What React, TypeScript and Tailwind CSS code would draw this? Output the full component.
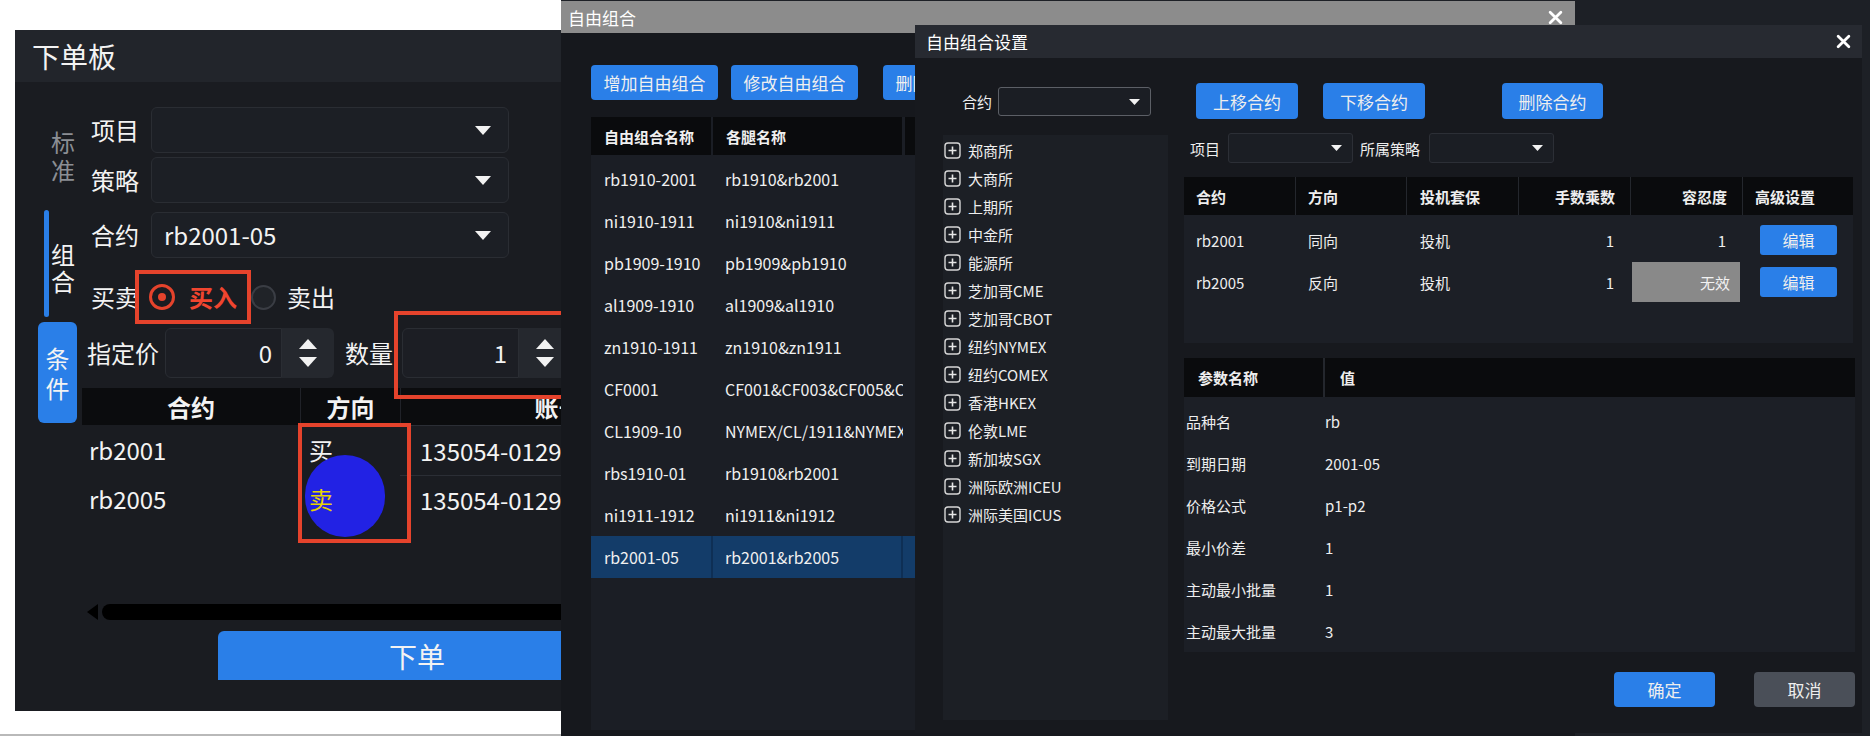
import React from "react";

const BLUE = "bg-[#2a7fe8]";

function Caret({ w = 14, h = 8, up = false }: { w?: number; h?: number; up?: boolean }) {
  return (
    <svg width={w} height={h} viewBox="0 0 14 8" preserveAspectRatio="none" className="shrink-0">
      <path d={up ? "M0 8 L7 0 L14 8 Z" : "M0 0 L14 0 L7 8 Z"} fill="#f2f2f2" />
    </svg>
  );
}

function CloseX() {
  return (
    <svg width="15" height="15" viewBox="0 0 14 14" className="shrink-0">
      <path d="M2 2 L12 12 M12 2 L2 12" stroke="#ffffff" strokeWidth="2.6" strokeLinecap="round" />
    </svg>
  );
}

function PlusBox() {
  return (
    <svg width="17" height="17" viewBox="0 0 17 17" className="shrink-0">
      <rect x="1" y="1" width="15" height="15" rx="3" fill="none" stroke="#d6d6d6" strokeWidth="1.4" />
      <path d="M8.5 4.5v8M4.5 8.5h8" stroke="#e6e6e6" strokeWidth="1.6" />
    </svg>
  );
}

function Spinner() {
  return (
    <div className="w-[52px] h-full bg-[#25282e] rounded-r-md flex flex-col items-center justify-center gap-[8px]">
      <Caret w={18} h={10} up />
      <Caret w={18} h={10} />
    </div>
  );
}

function OrderSelect({ label, value, className = "" }: { label: string; value?: string; className?: string }) {
  return (
    <div className={`flex items-center pl-[9px] ${className}`}>
      <span className="w-[60px] text-[24px] leading-none">{label}</span>
      <div className="w-[358px] h-[46px] rounded-md border border-[#2a2d33] bg-[#1c1f25] flex items-center justify-between pl-[12px] pr-[17px]">
        <span className="text-[24px] leading-none">{value ?? ""}</span>
        <Caret w={16} h={9} />
      </div>
    </div>
  );
}

function OrderPanel() {
  return (
    <div className="absolute left-[15px] top-[30px] w-[620px] h-[681px] bg-[#1a1c21] flex flex-col text-[#f3f3f3]">
      <div className="h-[52px] shrink-0 bg-[#22252b] flex items-center pl-[17px] text-[28px] leading-none">
        下单板
      </div>
      <div className="flex flex-1">
        <div className="w-[67px] shrink-0 flex flex-col">
          <div className="mt-[46px] ml-[36px] flex flex-col text-[24px] leading-[28px] text-[#8b8e94]">
            <span>标</span>
            <span>准</span>
          </div>
          <div className="mt-[26px] ml-[29px] h-[107px] flex items-center">
            <div className="w-[5px] h-full bg-[#2a7fe8] rounded-full" />
            <div className="ml-[2px] mt-[6px] flex flex-col text-[24px] leading-[27px]">
              <span>组</span>
              <span>合</span>
            </div>
          </div>
          <div className={`mt-[5px] ml-[23px] w-[39px] h-[101px] ${BLUE} rounded-md flex flex-col items-center justify-center text-[24px] leading-[30px]`}>
            <span>条</span>
            <span>件</span>
          </div>
        </div>

        <div className="flex-1 flex flex-col pt-[25px]">
          <OrderSelect label="项目" />
          <OrderSelect label="策略" className="mt-[4px]" />
          <OrderSelect label="合约" value="rb2001-05" className="mt-[9px]" />

          <div className="mt-[12px] h-[54px] flex items-center pl-[9px] text-[24px] leading-none">
            <span>买卖</span>
            <div className="-ml-[4px] h-[54px] w-[116px] shrink-0 border-4 border-[#e5432c] flex items-center pl-[10px]">
              <div className="w-[26px] h-[26px] rounded-full border-[3px] border-[#e5432c] flex items-center justify-center">
                <div className="w-[8px] h-[8px] rounded-full bg-[#e5432c]" />
              </div>
              <span className="ml-[14px] text-[#f0452f] font-bold">买入</span>
            </div>
            <div className="w-[25px] h-[25px] rounded-full border-2 border-[#3a3d44] bg-[#202328]" />
            <span className="ml-[11px]">卖出</span>
          </div>

          <div className="mt-[4px] h-[50px] flex items-center pl-[5px] text-[24px] leading-none">
            <span className="w-[72px]">指定价</span>
            <div className="ml-[6px] h-full flex">
              <div className="w-[117px] h-full rounded-l-md border border-[#2a2d33] bg-[#1c1e24] flex items-center justify-end pr-[9px]">
                0
              </div>
              <Spinner />
            </div>
            <span className="ml-[11px] w-[48px]">数量</span>
            <div className="ml-[9px] h-full flex">
              <div className="w-[117px] h-full rounded-l-md border border-[#2a2d33] bg-[#1c1e24] flex items-center justify-end pr-[11px]">
                1
              </div>
              <Spinner />
            </div>
          </div>

          <div className="mt-[10px] flex flex-col">
            <div className="h-[37px] flex bg-[#0b0c0e] text-[24px] font-bold leading-none">
              <div className="w-[218px] flex items-center justify-center">合约</div>
              <div className="w-[100px] flex items-center justify-center border-l border-[#202228]">方向</div>
              <div className="w-[316px] flex items-center justify-center border-l border-[#202228]">账号</div>
            </div>
            <div className="h-[50px] flex items-center text-[24px] leading-none">
              <div className="w-[218px] pl-[7px]">rb2001</div>
              <div className="w-[100px] pl-[9px]">买</div>
              <div className="w-[316px] h-full flex items-center pl-[20px] border-t border-[#2b2e35] whitespace-nowrap">135054-0129</div>
            </div>
            <div className="h-[48px] flex items-center text-[24px] leading-none">
              <div className="w-[218px] pl-[7px]">rb2005</div>
              <div className="relative z-10 w-[100px] pl-[9px] text-[#e8d400]">卖</div>
              <div className="w-[316px] h-full flex items-center pl-[20px] border-t border-[#2b2e35] whitespace-nowrap">135054-0129</div>
            </div>
          </div>

          <div className="mt-[81px] h-[16px] flex items-center pl-[5px]">
            <svg width="11" height="16" viewBox="0 0 11 16" className="shrink-0">
              <path d="M0 8 L11 0 L11 16 Z" fill="#000" />
            </svg>
            <div className="ml-[4px] flex-1 h-[16px] rounded-l-full bg-black" />
          </div>

          <div className={`mt-[11px] ml-[136px] w-[398px] h-[49px] ${BLUE} rounded-tl-md flex items-center justify-center text-[28px] leading-none`}>
            下单
          </div>
        </div>
      </div>

      {/* annotations drawn over the panel */}
      <div className="absolute left-[379px] top-[281px] w-[300px] h-[88px] border-4 border-[#e5432c]" />
      <div className="absolute left-[290px] top-[425px] w-[80px] h-[82px] rounded-full bg-[#2222e4]" />
      <div className="absolute left-[283px] top-[393px] w-[113px] h-[120px] border-4 border-[#e5432c]" />
    </div>
  );
}

const comboRows = [
  ["rb1910-2001", "rb1910&rb2001"],
  ["ni1910-1911", "ni1910&ni1911"],
  ["pb1909-1910", "pb1909&pb1910"],
  ["al1909-1910", "al1909&al1910"],
  ["zn1910-1911", "zn1910&zn1911"],
  ["CF0001", "CF001&CF003&CF005&CF007"],
  ["CL1909-10", "NYMEX/CL/1911&NYMEX/CL/1912"],
  ["rbs1910-01", "rb1910&rb2001"],
  ["ni1911-1912", "ni1911&ni1912"],
  ["rb2001-05", "rb2001&rb2005"],
];

function ComboPanel() {
  return (
    <div className="absolute left-[561px] top-[1px] w-[1014px] h-[735px] bg-[#16181d] flex flex-col text-[#f0f0f0]">
      <div className="h-[32px] shrink-0 bg-[#8c8c8c] flex items-center justify-between pl-[7px] pr-[12px]">
        <span className="text-[17px] leading-none text-white">自由组合</span>
        <CloseX />
      </div>
      <div className="flex-1 flex flex-col pl-[30px] pt-[32px] pb-[6px]">
        <div className="flex items-center text-[17px] leading-none">
          <div className={`w-[127px] h-[35px] ${BLUE} rounded flex items-center justify-center`}>增加自由组合</div>
          <div className={`ml-[13px] w-[127px] h-[35px] ${BLUE} rounded flex items-center justify-center`}>修改自由组合</div>
          <div className={`ml-[25px] w-[127px] h-[35px] ${BLUE} rounded flex items-center justify-center`}>删除自由组合</div>
        </div>
        <div className="mt-[17px] w-[900px] flex-1 bg-[#1b1e25] flex flex-col">
          <div className="h-[38px] flex bg-[#1b1e25] text-[15px] font-bold leading-none">
            <div className="w-[120px] bg-[#0a0b0d] flex items-center pl-[13px]">自由组合名称</div>
            <div className="ml-[2px] w-[189px] bg-[#0a0b0d] flex items-center pl-[13px]">各腿名称</div>
            <div className="ml-[3px] flex-1 bg-[#0a0b0d]" />
          </div>
          <div className="pt-[3px] flex flex-col">
            {comboRows.map(([name, legs], i) => {
              const sel = i === comboRows.length - 1;
              return (
                <div key={name} className={`h-[42px] flex items-center text-[16px] leading-none ${sel ? "bg-[#133c69]" : ""}`}>
                  <div className={`w-[122px] h-full flex items-center pl-[13px] ${sel ? "border-r-2 border-[#0e2f55]" : ""}`}>{name}</div>
                  <div className={`w-[190px] h-full flex items-center pl-[12px] pr-[8px] overflow-hidden whitespace-nowrap ${sel ? "border-r-2 border-[#0e2f55]" : ""}`}>
                    {legs}
                  </div>
                </div>
              );
            })}
          </div>
        </div>
      </div>
    </div>
  );
}

const exchanges = [
  "郑商所",
  "大商所",
  "上期所",
  "中金所",
  "能源所",
  "芝加哥CME",
  "芝加哥CBOT",
  "纽约NYMEX",
  "纽约COMEX",
  "香港HKEX",
  "伦敦LME",
  "新加坡SGX",
  "洲际欧洲ICEU",
  "洲际美国ICUS",
];

const params = [
  ["品种名", "rb"],
  ["到期日期", "2001-05"],
  ["价格公式", "p1-p2"],
  ["最小价差", "1"],
  ["主动最小批量", "1"],
  ["主动最大批量", "3"],
];

function SmallSelect({ w, h, border = "border-[#2c2f36]" }: { w: string; h: string; border?: string }) {
  return (
    <div className={`${w} ${h} border ${border} rounded-[3px] bg-[#1b1e24] flex items-center justify-end pr-[10px]`}>
      <Caret w={11} h={6} />
    </div>
  );
}

function SettingsPanel() {
  return (
    <div className="absolute left-[915px] top-[25px] w-[947px] h-[708px] bg-[#17191e] flex flex-col text-[#eeeeee]">
      <div className="h-[33px] shrink-0 bg-[#272a31] flex items-center justify-between pl-[11px] pr-[11px]">
        <span className="text-[17px] leading-none text-white">自由组合设置</span>
        <CloseX />
      </div>
      <div className="flex-1 flex pl-[28px]">
        <div className="w-[225px] flex flex-col">
          <div className="mt-[29px] h-[29px] flex items-center pl-[19px]">
            <span className="w-[30px] text-[15px] leading-none">合约</span>
            <div className="ml-[6px]">
              <SmallSelect w="w-[153px]" h="h-[29px]" border="border-[#5c5f66]" />
            </div>
          </div>
          <div className="mt-[19px] h-[585px] bg-[#1c1f25] pt-[1px] flex flex-col">
            {exchanges.map((ex) => (
              <div key={ex} className="h-[28px] flex items-center pl-[1px] gap-[7px] text-[15px] leading-none">
                <PlusBox />
                <span>{ex}</span>
              </div>
            ))}
          </div>
        </div>

        <div className="ml-[16px] w-[671px] flex flex-col">
          <div className="mt-[25px] h-[36px] flex pl-[12px] text-[17px] leading-none">
            <div className={`w-[102px] ${BLUE} rounded flex items-center justify-center`}>上移合约</div>
            <div className={`ml-[25px] w-[102px] ${BLUE} rounded flex items-center justify-center`}>下移合约</div>
            <div className={`ml-[77px] w-[101px] ${BLUE} rounded flex items-center justify-center`}>删除合约</div>
          </div>

          <div className="mt-[14px] h-[30px] flex items-center pl-[6px] text-[15px] leading-none">
            <span className="w-[30px]">项目</span>
            <div className="ml-[8px]">
              <SmallSelect w="w-[125px]" h="h-[30px]" />
            </div>
            <span className="ml-[7px] w-[60px]">所属策略</span>
            <div className="ml-[9px]">
              <SmallSelect w="w-[125px]" h="h-[30px]" />
            </div>
          </div>

          <div className="mt-[14px] w-[669px] flex flex-col">
            <div className="h-[38px] flex bg-[#0a0b0d] text-[15px] font-bold leading-none">
              <div className="w-[111px] flex items-center pl-[12px]">合约</div>
              <div className="w-[111px] flex items-center pl-[12px] border-l border-[#24272d]">方向</div>
              <div className="w-[112px] flex items-center pl-[13px] border-l border-[#24272d]">投机套保</div>
              <div className="w-[112px] flex items-center justify-end pr-[15px] border-l border-[#24272d]">手数乘数</div>
              <div className="w-[112px] flex items-center justify-end pr-[15px] border-l border-[#24272d]">容忍度</div>
              <div className="flex-1 flex items-center pl-[12px] border-l border-[#24272d]">高级设置</div>
            </div>
            <div className="h-[128px] bg-[#1c1f26] pt-[4px] flex flex-col text-[15px] leading-none">
              {[
                ["rb2001", "同向", "投机", "1", "1"],
                ["rb2005", "反向", "投机", "1", "无效"],
              ].map((r) => (
                <div key={r[0]} className="h-[42px] flex items-center">
                  <div className="w-[111px] pl-[12px]">{r[0]}</div>
                  <div className="w-[111px] pl-[13px]">{r[1]}</div>
                  <div className="w-[112px] pl-[14px]">{r[2]}</div>
                  <div className="w-[112px] text-right pr-[16px]">{r[3]}</div>
                  {r[4] === "无效" ? (
                    <div className="w-[112px] h-full flex items-center px-[2px] py-[1px]">
                      <div className="w-full h-full bg-[#898989] flex items-center justify-end pr-[10px] text-[#f2f2f2]">无效</div>
                    </div>
                  ) : (
                    <div className="w-[112px] text-right pr-[16px]">{r[4]}</div>
                  )}
                  <div className="flex-1 pl-[18px]">
                    <div className={`w-[77px] h-[30px] ${BLUE} rounded-[3px] flex items-center justify-center text-[16px]`}>编辑</div>
                  </div>
                </div>
              ))}
            </div>
          </div>

          <div className="mt-[15px] w-[671px] flex flex-col">
            <div className="h-[39px] flex bg-[#0a0b0d] text-[15px] font-bold leading-none">
              <div className="w-[139px] flex items-center pl-[14px]">参数名称</div>
              <div className="flex-1 flex items-center pl-[15px] border-l-2 border-[#24272d]">值</div>
            </div>
            <div className="h-[255px] bg-[#1c1f26] pt-[3px] flex flex-col text-[15px] leading-none">
              {params.map(([k, v]) => (
                <div key={k} className="h-[42px] flex items-center">
                  <div className="w-[141px] pl-[2px]">{k}</div>
                  <div>{v}</div>
                </div>
              ))}
            </div>
          </div>

          <div className="mt-[20px] flex justify-end text-[17px] leading-none">
            <div className={`w-[101px] h-[35px] ${BLUE} rounded flex items-center justify-center`}>确定</div>
            <div className="ml-[39px] w-[101px] h-[35px] bg-[#4a4f58] rounded flex items-center justify-center">取消</div>
          </div>
        </div>
      </div>
    </div>
  );
}

export default function App() {
  return (
    <div className="relative w-[1870px] h-[736px] overflow-hidden bg-white font-['Noto_Sans_CJK_SC','Noto_Sans',sans-serif]">
      <div className="absolute left-[561px] top-0 right-0 bottom-0 bg-[#1d2026]" />
      <div className="absolute left-0 bottom-0 w-[561px] h-[2px] bg-[#b9b9b9]" />
      <OrderPanel />
      <ComboPanel />
      <SettingsPanel />
    </div>
  );
}
